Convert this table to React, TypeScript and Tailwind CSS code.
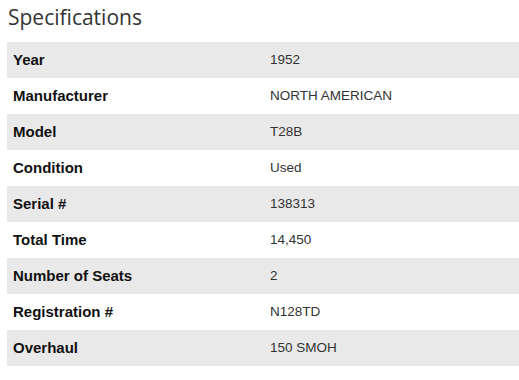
const rows: [string, string][] = [
  ["Year", "1952"],
  ["Manufacturer", "NORTH AMERICAN"],
  ["Model", "T28B"],
  ["Condition", "Used"],
  ["Serial #", "138313"],
  ["Total Time", "14,450"],
  ["Number of Seats", "2"],
  ["Registration #", "N128TD"],
  ["Overhaul", "150 SMOH"],
];

export default function App() {
  return (
    <div className="w-[519px] h-[380px] bg-white">
      <div className="pl-[8px] pt-[3px] h-[42px] text-[21px] text-[#333] leading-[28px]" style={{ fontFamily: '"Open Sans", sans-serif' }}>
        Specifications
      </div>
      <div className="ml-[7px] flex flex-col" style={{ fontFamily: '"Liberation Sans", Arial, sans-serif' }}>
        {rows.map(([k, v], i) => (
          <div key={k} className={`flex h-[36px] items-center pt-[1px] ${i % 2 === 0 ? "bg-[#e9e9e9]" : "bg-white"}`}>
            <div className="w-[257px] pl-[6px] font-bold text-[15px] text-[#111]">{k}</div>
            <div className="pl-[6px] text-[13.5px] text-[#333]">{v}</div>
          </div>
        ))}
      </div>
    </div>
  );
}
